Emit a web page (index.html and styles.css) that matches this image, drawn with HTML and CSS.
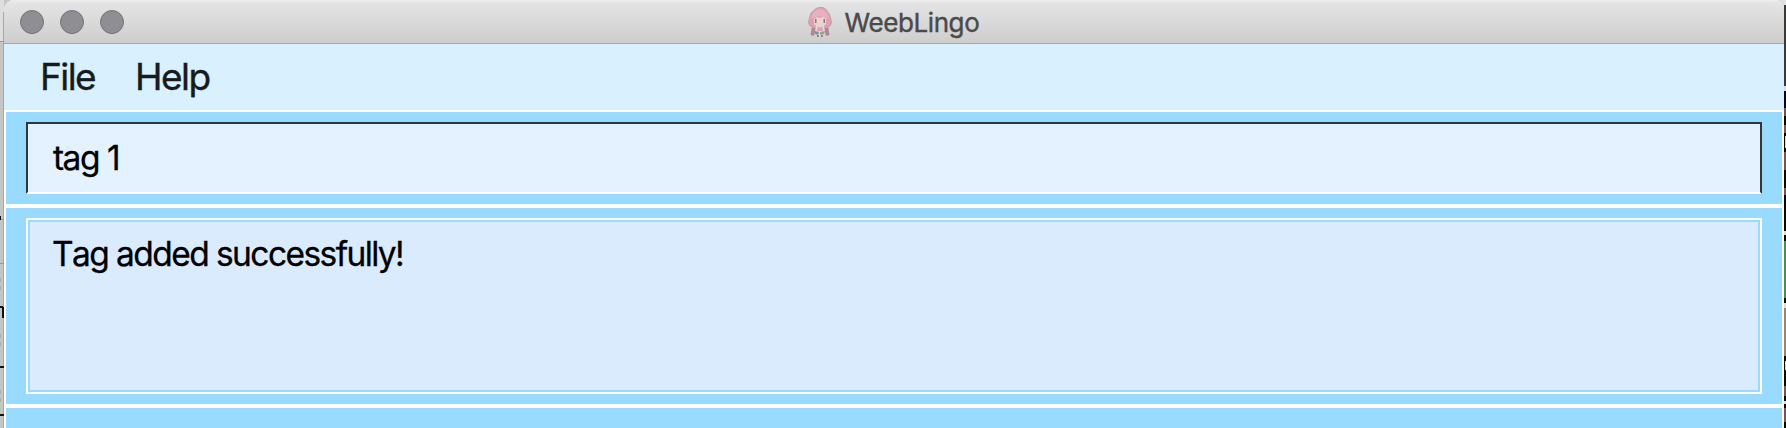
FILE: index.html
```html
<!DOCTYPE html>
<html lang="en">
<head>
<meta charset="utf-8">
<title>WeebLingo</title>
<link rel="stylesheet" href="styles.css">
</head>
<body>
<div class="desktop">
  <svg class="edge" width="4" height="428" viewBox="0 0 4 428" shape-rendering="crispEdges">
    <rect width="4" height="428" fill="#c5c5c3"/>
    <rect width="4" height="41" fill="#dededd"/>
    <rect x="3" y="12" width="1" height="416" fill="#a7a7a7"/>
    <path fill="#999" d="M0 41h4v1H0zM0 219h4v1H0zM0 263h4v1H0z"/>
    <path fill="#b0b0af" d="M0 278h1v4H0zM0 286h1v4H0zM0 334h1v4H0zM0 342h1v4H0zM0 390h1v4H0zM0 398h1v4H0z"/>
    <path fill="#111" d="M0 216h1v4H0zM0 306h3l1 2v10H2v-10H0zM0 366h4v2H0zM0 414h4v2H0z"/>
  </svg>
  <main class="window">
    <header class="titlebar">
      <div class="lights"><i class="light"></i><i class="light"></i><i class="light"></i></div>
      <svg class="icon" width="24" height="30" viewBox="0 0 24 30">
        <path d="M4 19L2.500 28l3.500 1 2-8zM20 19l1.500 9-3.500 1-2-8z" fill="#ad8796"/>
        <path d="M8 1.500L11 .5h4l3 2 3 4 1.500 4 1 5-1 3-4 2.500H5.500l-4-2.500-1-3 1-5L3 6z" fill="#dfa0b4" stroke="#b79ca6" stroke-width=".8"/>
        <path d="M5 6l5-4 6 1 4 5 1 4-4-1-5-2-5 1-4 2z" fill="#eab0c0"/>
        <path d="M6 12l3-2 3 1 3-1 3 2v5l-3 2.500H9L6 17z" fill="#ead4cc"/>
        <path d="M7 12h1.500v4H7zM15.500 12H17v4h-1.500z" fill="#897783"/>
        <path d="M8 19h8l1 6-3 4h-4l-3-4z" fill="#e5d8d2"/>
        <path d="M10 19l2 2 2-2 1 5H9z" fill="#dc9fb3"/>
        <path d="M7 24l4 1-1 3-3-1z" fill="#7e90ac"/>
        <path d="M12 25l5-1-1 3-4 1z" fill="#8cab85"/>
        <path d="M9 28h2v2H9zM13 28h2v2h-2z" fill="#92868b"/>
      </svg>
      <h1 class="title">WeebLingo</h1>
    </header>
    <nav class="menu"><span class="file">File</span><span class="help">Help</span></nav>
    <section class="pane command"><div class="field"><span class="command-text">tag 1</span></div></section>
    <section class="pane result"><div class="output"><span class="result-text">Tag added successfully!</span></div></section>
    <section class="pane rest"></section>
  </main>
  <svg class="edge" width="2" height="428" viewBox="0 0 2 428" shape-rendering="crispEdges">
    <rect width="2" height="428" fill="#080808"/>
    <rect width="2" height="5" fill="#e2e2e2"/>
    <rect y="5" width="2" height="81" fill="#3d3834"/>
    <path fill="#ddd" d="M0 86h2v5H0zM1 136h1v12H1zM0 231h2v4H0zM0 303h2v5H0zM1 361h1v9H1zM0 401h2v3H0z"/>
    <path fill="#79505e" d="M0 108h2v8H0zM0 125h2v8H0zM0 152h2v18H0zM0 188h2v7H0zM0 386h2v10H0zM0 408h2v14H0z"/>
    <rect y="241" width="2" height="57" fill="#4b8a60"/>
    <rect y="308" width="2" height="48" fill="#9b8374"/>
  </svg>
</div>
</body>
</html>
```
FILE: styles.css
```css
* { box-sizing: border-box; }
body { margin: 0; background: #fff; font-family: Inter, "Liberation Sans", sans-serif; }
.desktop { display: grid; grid-template-columns: 4px 1780px 2px; height: 428px; overflow: hidden; background: linear-gradient(90deg, #c8c8c8 50%, #dedede 50%); }
.edge { display: block; }
.window { display: grid; grid-template-rows: 44px 68px 92px 4px 196px 4px 20px; background: #fff; border-radius: 10px 10px 0 0; overflow: hidden; }
.titlebar { display: flex; align-items: center; background: linear-gradient(#eeeeee 0, #e4e4e4 3px, #cecece 42px); border-bottom: 1px solid #a8a6a4; }
.lights { display: flex; gap: 16px; padding-left: 16px; width: 804px; }
.light { width: 24px; height: 24px; border-radius: 50%; background: #8f8e93; border: 1px solid #737277; }
.title { margin: 2px 0 0 12.500px; font-size: 26px; line-height: 40px; font-weight: 400; color: #4a4a4a; -webkit-text-stroke: .4px #4a4a4a; letter-spacing: -.4px; }
.menu { display: flex; background: #d9f1ff; border-bottom: 2px solid #fff; padding-left: 36px; font-size: 37px; line-height: 65px; color: #171b1c; -webkit-text-stroke: .4px #171b1c; letter-spacing: -1.55px; }
.file { width: 95px; }
.pane { margin: 0 2px; background: #99daff; }
.command { padding: 10px 20px; }
.field { height: 72px; padding-left: 25px; background: #e4f2ff; border: 2px solid #333638; border-bottom-color: #fff; font-size: 33.5px; line-height: 68px; letter-spacing: -1.5px; color: #000; -webkit-text-stroke: .3px #000; }
.result { grid-row: 5; padding: 10px 20px; }
.output { height: 176px; padding: 10px 0 0 24px; border: 2px solid #fff; outline: 2px solid #99daff; outline-offset: -4px; background: #d9ebfd; font-size: 33.5px; line-height: 48px; letter-spacing: -1.57px; font-kerning: none; color: #000; -webkit-text-stroke: .3px #000; }
.rest { grid-row: 7; }
```
